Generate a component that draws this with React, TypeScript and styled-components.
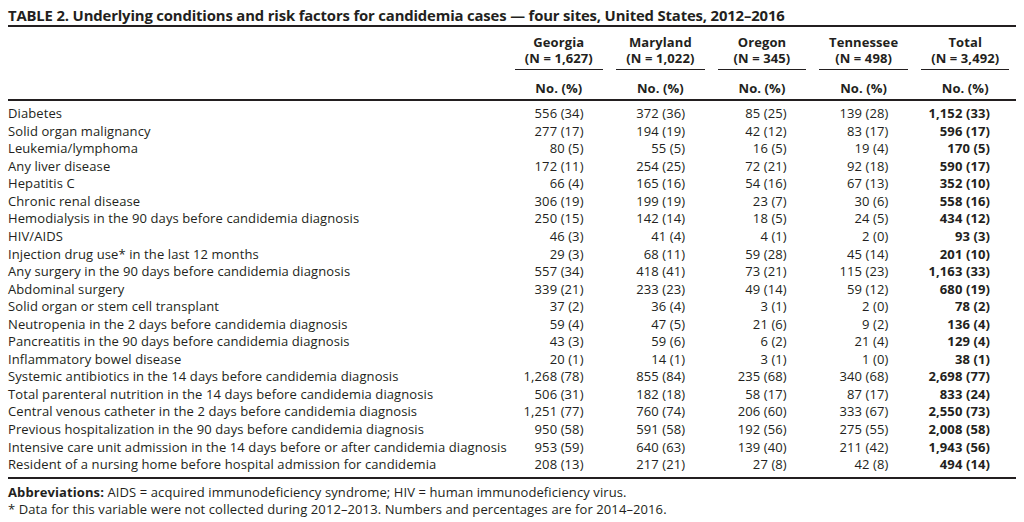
import React from "react";
import styled, { createGlobalStyle } from "styled-components";

const Global = createGlobalStyle`
  html, body { margin: 0; padding: 0; background: #ffffff; }
  body { font-family: "Open Sans", "Liberation Sans", sans-serif; color: #231f20; }
`;

const Page = styled.div`
  width: 1008px;
  padding: 6px 8px 0 8px;
`;

const Title = styled.h1`
  margin: 0;
  font-size: 14.85px;
  font-weight: 700;
  line-height: 19px;
  height: 19px;
  letter-spacing: -0.15px;
  white-space: nowrap;
`;

const Grid = styled.div`
  display: grid;
  grid-template-columns: 500px repeat(5, 1fr);
  border-top: 2px solid #231f20;
  border-bottom: 2px solid #231f20;
`;

const HeadCell = styled.div`
  box-sizing: border-box;
  display: flex;
  flex-direction: column;
  align-items: stretch;
  height: 74px;
  padding-top: 7px;
  font-weight: 700;
  font-size: 13px;
  line-height: 16px;
  letter-spacing: 0.1px;
  text-align: center;
  border-bottom: 2px solid #231f20;
`;

const HeadNames = styled.div`
  margin: 0 6.5px;
  padding-bottom: 3px;
  border-bottom: 1.5px solid #231f20;
`;

const HeadUnit = styled.div`
  margin-top: 9.5px;
`;

const Label = styled.div<{ $first?: boolean; $last?: boolean }>`
  font-size: 13px;
  line-height: 17.55px;
  letter-spacing: 0.1px;
  white-space: nowrap;
  padding-top: ${(p) => (p.$first ? "4.2px" : "0")};
  padding-bottom: ${(p) => (p.$last ? "3.2px" : "0")};
`;

const Value = styled(Label)<{ $bold?: boolean }>`
  text-align: right;
  padding-right: 26px;
  font-weight: ${(p) => (p.$bold ? 700 : 400)};
`;

const Notes = styled.div`
  padding-top: 5.4px;
  font-size: 13px;
  line-height: 16.6px;
  letter-spacing: 0.1px;
  white-space: nowrap;
`;

const Strong = styled.span`
  font-weight: 700;
`;

const sites = [
  ["Georgia", "(N = 1,627)"],
  ["Maryland", "(N = 1,022)"],
  ["Oregon", "(N = 345)"],
  ["Tennessee", "(N = 498)"],
  ["Total", "(N = 3,492)"],
];

const rows: [string, string, string, string, string, string][] = [
  ["Diabetes", "556 (34)", "372 (36)", "85 (25)", "139 (28)", "1,152 (33)"],
  ["Solid organ malignancy", "277 (17)", "194 (19)", "42 (12)", "83 (17)", "596 (17)"],
  ["Leukemia/lymphoma", "80 (5)", "55 (5)", "16 (5)", "19 (4)", "170 (5)"],
  ["Any liver disease", "172 (11)", "254 (25)", "72 (21)", "92 (18)", "590 (17)"],
  ["Hepatitis C", "66 (4)", "165 (16)", "54 (16)", "67 (13)", "352 (10)"],
  ["Chronic renal disease", "306 (19)", "199 (19)", "23 (7)", "30 (6)", "558 (16)"],
  ["Hemodialysis in the 90 days before candidemia diagnosis", "250 (15)", "142 (14)", "18 (5)", "24 (5)", "434 (12)"],
  ["HIV/AIDS", "46 (3)", "41 (4)", "4 (1)", "2 (0)", "93 (3)"],
  ["Injection drug use* in the last 12 months", "29 (3)", "68 (11)", "59 (28)", "45 (14)", "201 (10)"],
  ["Any surgery in the 90 days before candidemia diagnosis", "557 (34)", "418 (41)", "73 (21)", "115 (23)", "1,163 (33)"],
  ["Abdominal surgery", "339 (21)", "233 (23)", "49 (14)", "59 (12)", "680 (19)"],
  ["Solid organ or stem cell transplant", "37 (2)", "36 (4)", "3 (1)", "2 (0)", "78 (2)"],
  ["Neutropenia in the 2 days before candidemia diagnosis", "59 (4)", "47 (5)", "21 (6)", "9 (2)", "136 (4)"],
  ["Pancreatitis in the 90 days before candidemia diagnosis", "43 (3)", "59 (6)", "6 (2)", "21 (4)", "129 (4)"],
  ["Inflammatory bowel disease", "20 (1)", "14 (1)", "3 (1)", "1 (0)", "38 (1)"],
  ["Systemic antibiotics in the 14 days before candidemia diagnosis", "1,268 (78)", "855 (84)", "235 (68)", "340 (68)", "2,698 (77)"],
  ["Total parenteral nutrition in the 14 days before candidemia diagnosis", "506 (31)", "182 (18)", "58 (17)", "87 (17)", "833 (24)"],
  ["Central venous catheter in the 2 days before candidemia diagnosis", "1,251 (77)", "760 (74)", "206 (60)", "333 (67)", "2,550 (73)"],
  ["Previous hospitalization in the 90 days before candidemia diagnosis", "950 (58)", "591 (58)", "192 (56)", "275 (55)", "2,008 (58)"],
  ["Intensive care unit admission in the 14 days before or after candidemia diagnosis", "953 (59)", "640 (63)", "139 (40)", "211 (42)", "1,943 (56)"],
  ["Resident of a nursing home before hospital admission for candidemia", "208 (13)", "217 (21)", "27 (8)", "42 (8)", "494 (14)"],
];

export default function App() {
  return (
    <Page>
      <Global />
      <Title>
        TABLE 2. Underlying conditions and risk factors for candidemia cases — four sites, United States, 2012–2016
      </Title>
      <Grid>
        <HeadCell />
        {sites.map(([name, n]) => (
          <HeadCell key={name}>
            <HeadNames>
              <div>{name}</div>
              <div>{n}</div>
            </HeadNames>
            <HeadUnit>No. (%)</HeadUnit>
          </HeadCell>
        ))}
        {rows.map((r, i) => {
          const first = i === 0;
          const last = i === rows.length - 1;
          return (
            <React.Fragment key={r[0]}>
              <Label $first={first} $last={last}>{r[0]}</Label>
              {r.slice(1).map((v, j) => (
                <Value key={j} $first={first} $last={last} $bold={j === 4}>
                  {v}
                </Value>
              ))}
            </React.Fragment>
          );
        })}
      </Grid>
      <Notes>
        <div>
          <Strong>Abbreviations:</Strong> AIDS = acquired immunodeficiency syndrome; HIV = human immunodeficiency virus.
        </div>
        <div>* Data for this variable were not collected during 2012–2013. Numbers and percentages are for 2014–2016.</div>
      </Notes>
    </Page>
  );
}
